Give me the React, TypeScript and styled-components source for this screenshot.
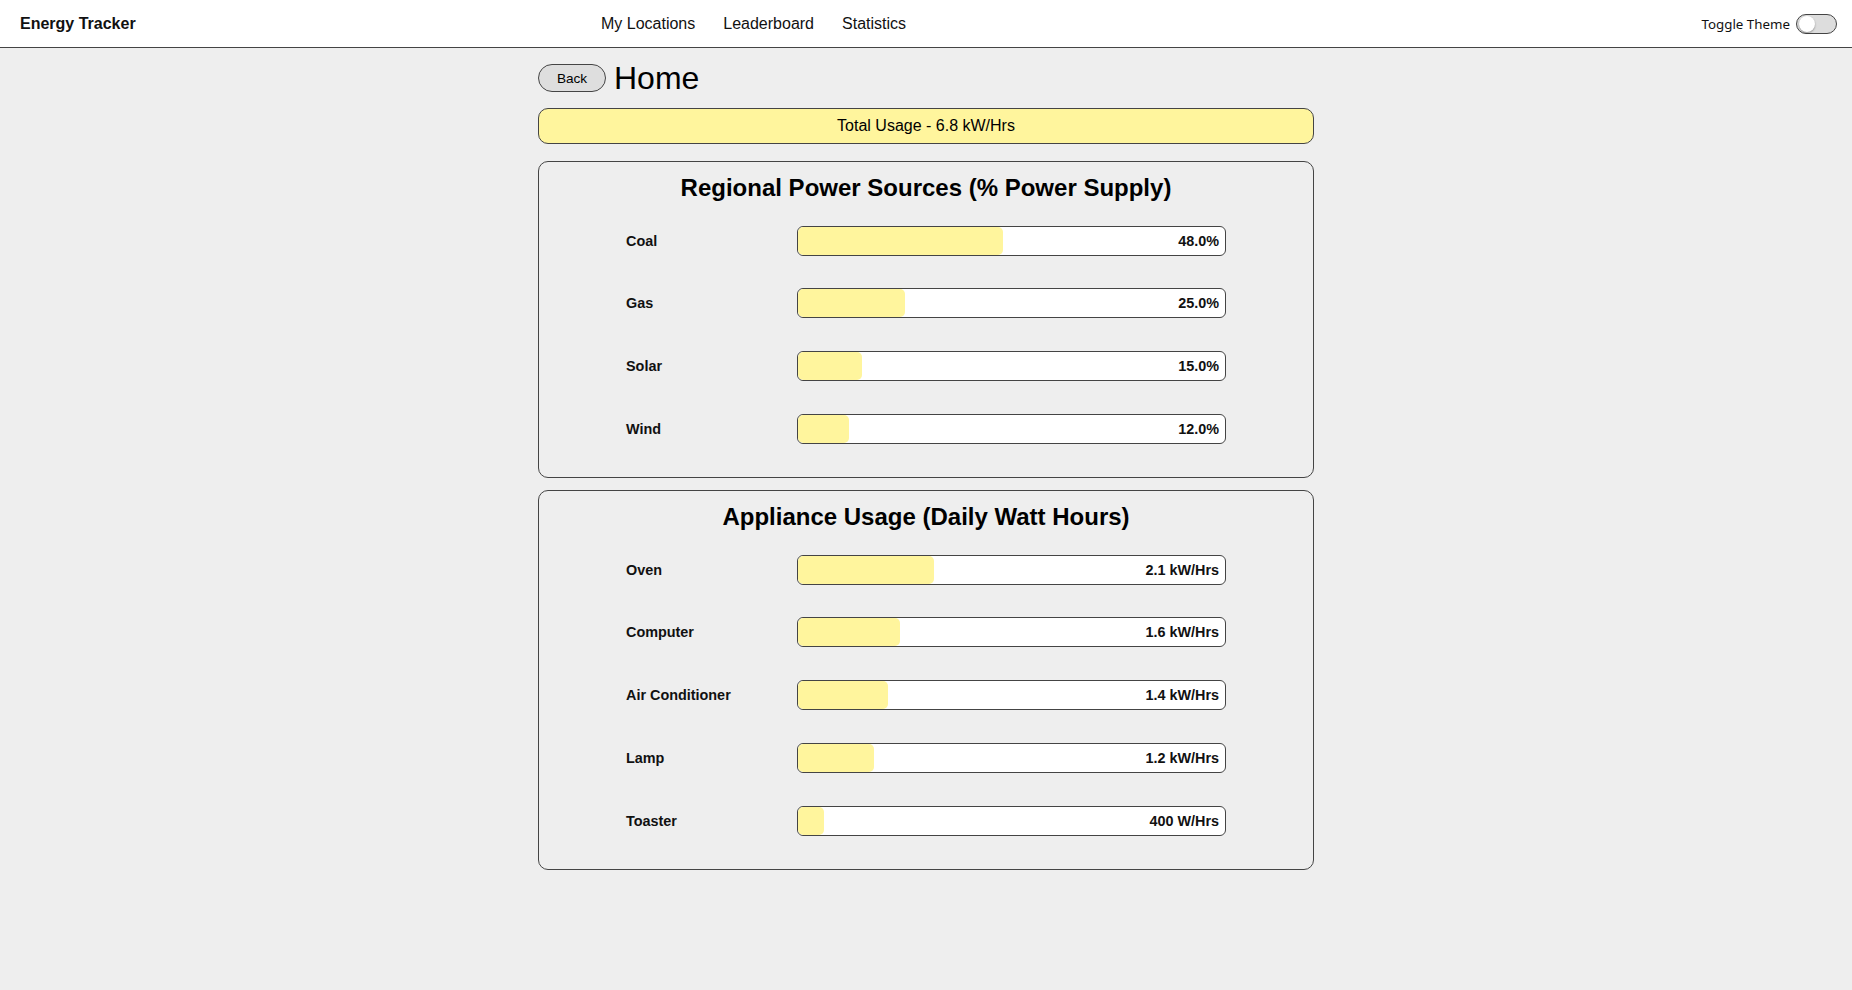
import React from "react";
import styled, { createGlobalStyle } from "styled-components";

const GlobalStyle = createGlobalStyle`
  html, body { margin: 0; padding: 0; }
  body {
    background: #eeeeee;
    font-family: "Liberation Sans", Arial, sans-serif;
    color: #000;
  }
  * { box-sizing: border-box; }
`;

const Header = styled.header`
  height: 48px;
  background: #ffffff;
  border-bottom: 1px solid #444444;
  display: flex;
  align-items: center;
  padding: 0 15px 0 20px;
`;

const Brand = styled.div`
  font-size: 16px;
  font-weight: 700;
  color: #111;
  width: 116px;
`;

const Nav = styled.nav`
  display: flex;
  gap: 28px;
  margin-left: 465px;
  flex: 1;
`;

const NavLink = styled.a`
  font-size: 16px;
  color: #111;
  text-decoration: none;
  cursor: pointer;
`;

const ThemeToggle = styled.label`
  display: flex;
  align-items: center;
  gap: 6px;
  font-family: "Noto Sans", "Open Sans", sans-serif;
  font-size: 13.33px;
  color: #111;
`;

const Switch = styled.span`
  position: relative;
  width: 41px;
  height: 20px;
  border-radius: 10px;
  background: #dddddd;
  border: 1px solid #444444;
`;

const Knob = styled.span`
  position: absolute;
  left: 2px;
  top: 1px;
  width: 16px;
  height: 16px;
  border-radius: 50%;
  background: #ffffff;
  box-shadow: 0 1px 2px rgba(0, 0, 0, 0.35);
`;

const Main = styled.main`
  width: 776px;
  margin: 0 auto;
  padding: 14px 0 40px;
`;

const TitleRow = styled.div`
  display: flex;
  align-items: center;
  gap: 8px;
  height: 32px;
`;

const BackButton = styled.button`
  height: 28px;
  width: 68px;
  border-radius: 14px;
  border: 1px solid #444444;
  background: #dedede;
  font-family: "Liberation Sans", Arial, sans-serif;
  font-size: 13.6px;
  color: #000;
  padding: 0;
  cursor: pointer;
`;

const PageTitle = styled.h1`
  margin: 0;
  font-size: 32px;
  font-weight: 400;
  line-height: 1;
`;

const TotalBar = styled.div`
  margin-top: 14px;
  height: 36px;
  border: 1px solid #444444;
  border-radius: 10px;
  background: #fff59d;
  display: flex;
  align-items: center;
  justify-content: center;
  font-size: 16px;
`;

const Card = styled.section<{ $gap: number }>`
  margin-top: ${(p) => p.$gap}px;
  border: 1px solid #444444;
  border-radius: 10px;
  padding: 12px 0 33px;
  display: flex;
  flex-direction: column;
  align-items: center;
`;

const CardTitle = styled.h2`
  margin: 0 0 24px;
  font-size: 24px;
  font-weight: 700;
  line-height: 27.6px;
  text-align: center;
`;

const Rows = styled.div`
  width: 600px;
  display: flex;
  flex-direction: column;
  gap: 32.8px;
`;

const Row = styled.div`
  display: grid;
  grid-template-columns: 171px 429px;
  align-items: center;
  height: 30px;
`;

const Label = styled.span`
  font-size: 14.4px;
  font-weight: 700;
  color: #111;
`;

const Track = styled.div`
  position: relative;
  height: 30px;
  border: 1px solid #444444;
  border-radius: 6px;
  background: #ffffff;
  overflow: hidden;
  display: flex;
  align-items: center;
  justify-content: flex-end;
  padding-right: 6px;
`;

const Fill = styled.div`
  position: absolute;
  left: 0;
  top: 0;
  bottom: 0;
  background: #fff59d;
  border-radius: 5px;
`;

const Value = styled.span`
  position: relative;
  font-size: 14.4px;
  font-weight: 700;
  color: #111;
`;

type Item = { name: string; pct: number; value: string };

const sources: Item[] = [
  { name: "Coal", pct: 48, value: "48.0%" },
  { name: "Gas", pct: 25, value: "25.0%" },
  { name: "Solar", pct: 15, value: "15.0%" },
  { name: "Wind", pct: 12, value: "12.0%" },
];

const appliances: Item[] = [
  { name: "Oven", pct: 31.8, value: "2.1 kW/Hrs" },
  { name: "Computer", pct: 24, value: "1.6 kW/Hrs" },
  { name: "Air Conditioner", pct: 21, value: "1.4 kW/Hrs" },
  { name: "Lamp", pct: 17.9, value: "1.2 kW/Hrs" },
  { name: "Toaster", pct: 6, value: "400 W/Hrs" },
];

const BarCard = ({ title, items, gap }: { title: string; items: Item[]; gap: number }) => (
  <Card $gap={gap}>
    <CardTitle>{title}</CardTitle>
    <Rows>
      {items.map((it) => (
        <Row key={it.name}>
          <Label>{it.name}</Label>
          <Track>
            <Fill style={{ width: `${it.pct}%` }} />
            <Value>{it.value}</Value>
          </Track>
        </Row>
      ))}
    </Rows>
  </Card>
);

export default function App() {
  return (
    <>
      <GlobalStyle />
      <Header>
        <Brand>Energy Tracker</Brand>
        <Nav>
          <NavLink>My Locations</NavLink>
          <NavLink>Leaderboard</NavLink>
          <NavLink>Statistics</NavLink>
        </Nav>
        <ThemeToggle>
          Toggle Theme
          <Switch>
            <Knob />
          </Switch>
        </ThemeToggle>
      </Header>
      <Main>
        <TitleRow>
          <BackButton>Back</BackButton>
          <PageTitle>Home</PageTitle>
        </TitleRow>
        <TotalBar>Total Usage - 6.8 kW/Hrs</TotalBar>
        <BarCard title="Regional Power Sources (% Power Supply)" items={sources} gap={17} />
        <BarCard title="Appliance Usage (Daily Watt Hours)" items={appliances} gap={12} />
      </Main>
    </>
  );
}
